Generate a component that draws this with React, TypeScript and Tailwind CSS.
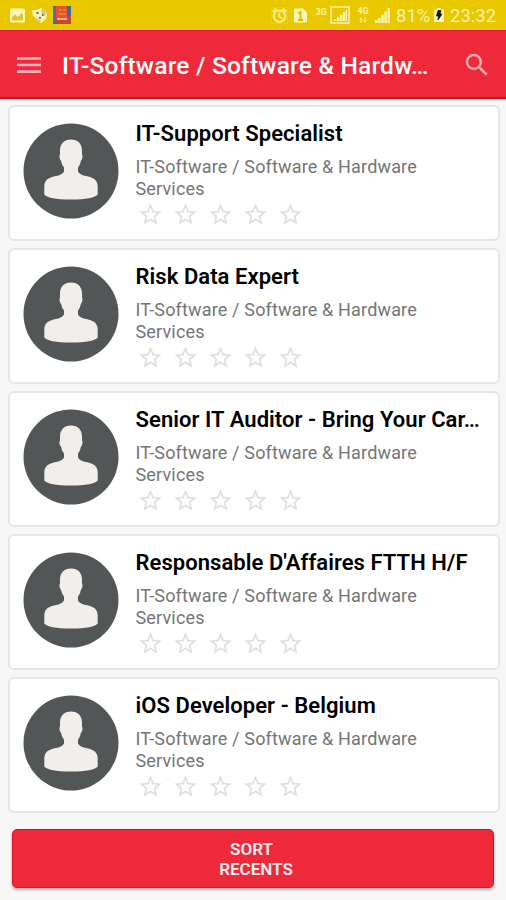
import { MdAccessAlarm, MdMenu, MdSearch, MdStarBorder } from 'react-icons/md';

interface Job {
  id: number;
  title: string;
  category: string;
}

const CATEGORY = 'IT-Software / Software & Hardware Services';

const jobs: Job[] = [
  { id: 1, title: 'IT-Support Specialist', category: CATEGORY },
  { id: 2, title: 'Risk Data Expert', category: CATEGORY },
  { id: 3, title: 'Senior IT Auditor - Bring Your Car…', category: CATEGORY },
  { id: 4, title: "Responsable D'Affaires FTTH H/F", category: CATEGORY },
  { id: 5, title: 'iOS Developer - Belgium', category: CATEGORY },
];

function StatusBar() {
  return (
    <div className="flex h-[30px] shrink-0 items-center bg-[#e9c800] px-[10px] text-[#fbf3a8]">
      {/* Notifications */}
      <svg className="h-[15px] w-[15px]" viewBox="0 0 15 15" aria-hidden="true">
        <rect width="15" height="14" y="0.5" rx="1.5" fill="#fdf6b4" />
        <path d="M2 12.5V9l3-2.5 3 2.5 3.5-4L13 7v5.5z" fill="#e0c62c" />
      </svg>
      <svg className="ml-[7px] h-[16px] w-[15px]" viewBox="0 0 15 16" aria-hidden="true">
        <path d="M0 3l4 0 5-2 4 2 2 4-1 5-5 4-4-3-4-5z" fill="#f7f0c0" />
        <path d="M9 2l4 1 1 4-2 2-2-3z" fill="#d6c67a" />
        <path d="M4.5 5h2v2h-2zM10 7h1.5v2H10zM7 10h2v1.5H7z" fill="#75642c" />
        <path d="M3 10l4 2 2 1-1 2-3-2z" fill="#ddd08a" />
      </svg>
      <svg className="ml-[6px] h-[18px] w-[18px]" viewBox="0 0 18 18" aria-hidden="true">
        <rect width="18" height="18" fill="#c8482c" />
        <path d="M0 0h3v14l-2 4H0z" fill="#4d6f9c" />
        <path d="M3 0h11v12H3z" fill="#e35426" />
        <path d="M14 0h4v9l-3 2z" fill="#3c6a9a" />
        <path d="M6 4h3M10 4h3M5 8h8" stroke="#f08040" strokeWidth="1.5" />
        <path d="M4 12h10v2H4z" fill="#f2b090" />
        <path d="M0 16h5v2H0z" fill="#3c6a9a" />
      </svg>

      {/* Network, battery and clock */}
      <MdAccessAlarm className="ml-auto h-[17px] w-[17px] stroke-[#fbf3a8]" strokeWidth="0.5" aria-hidden="true" />
      <svg className="ml-[6px] h-[15px] w-[13px]" viewBox="0 0 13 15" aria-hidden="true">
        <path d="M0 1.5Q0 .5 1 .5h8l4 4v9q0 1-1 1H1q-1 0-1-1z" fill="#fdf6b4" />
        <path d="M4 5.5L6.5 4v8M4 12h5" fill="none" stroke="#d8b800" strokeWidth="1.8" />
      </svg>
      <span className="ml-[9px] -mt-[6px] text-[9px] font-bold leading-none">3G</span>
      <svg className="ml-[3px] h-[18px] w-[20px]" viewBox="0 0 20 18" aria-hidden="true">
        <rect x="1" y="1" width="18" height="16" fill="none" stroke="currentColor" strokeWidth="1.5" />
        <path d="M4 15v-2h2.5v2zM7 15v-4h2.500v4zM10 15V9h2.3v6zM12.8 15V6H15v9zM15.5 15V4H17v11z" fill="currentColor" />
      </svg>
      <span className="ml-[7px] flex w-[12px] flex-col items-center">
        <span className="text-[9px] font-bold leading-[8px]">4G</span>
        <svg className="mt-[2px] h-[6px] w-[8px]" viewBox="0 0 8 6" aria-hidden="true">
          <path d="M2 6V1M.5 2.5L2 1l1.5 1.5M6 0v5M4.5 3.5L6 5l1.5-1.5" fill="none" stroke="currentColor" />
        </svg>
      </span>
      <svg className="ml-[6px] h-[15px] w-[15px]" viewBox="0 0 15 15" aria-hidden="true">
        <path d="M0 15v-3h2.6v3zM3.1 15v-5h2.6v5zM6.2 15V6.5h2.6V15zM9.3 15V3.5h2.5V15zM12.4 15V0H15v15z" fill="currentColor" />
      </svg>
      <span className="ml-[6px] mt-[2px] w-[33px] whitespace-nowrap text-[18.5px] leading-none">81%</span>
      <svg className="ml-[5px] h-[14px] w-[10px]" viewBox="0 0 10 14" aria-hidden="true">
        <path d="M0 1.5h3V0h4v1.5h3V14H0z" fill="#fdf6b4" />
        <path d="M4 2.5h3L6 6h2l-4 6 .5-4h-2z" fill="#111" stroke="#111" strokeWidth=".8" />
      </svg>
      <span className="ml-[6px] mt-[2px] w-[46px] whitespace-nowrap text-[18.5px] leading-none">23:32</span>
    </div>
  );
}

function Header() {
  return (
    <header className="flex h-[69px] shrink-0 items-center border-b-2 border-t border-b-[#dc0c18] border-t-[#e01c18] bg-[#ee2a3a] pl-[12.5px] pr-[14px]">
      <button type="button" aria-label="Menu" className="mt-px text-[#ffb0b8]">
        <MdMenu className="h-8 w-8" />
      </button>
      <h1 className="ml-[17.5px] mt-[4px] whitespace-nowrap text-[24.5px] font-medium tracking-[0.2px] text-white">
        IT-Software / Software &amp; Hardw…
      </h1>
      <button type="button" aria-label="Search" className="ml-auto mt-px text-[#ffb0b8]">
        <MdSearch className="h-[30px] w-[30px]" />
      </button>
    </header>
  );
}

function Avatar() {
  return (
    <svg className="mt-[0.5px] h-[96px] w-[96px] shrink-0" viewBox="0 0 96 96" aria-hidden="true">
      <circle cx="48" cy="48" r="47.5" fill="#535657" />
      <path
        d="M48 16.500c-7 0-11 4.500-11 11v4c-1 1-.5 5 1.200 6.500.5 3 1.300 4.500 2.800 6.500v4c-2 4-7 4-12 5.500-5 1.500-7.700 4.500-7.700 9.500v8c2 3 12 5 26.700 5s24.700-2 26.700-5v-8c0-5-2.700-8-7.700-9.500-5-1.500-10-1.500-12-5.500v-4c1.500-2 2.300-3.500 2.800-6.500 1.700-1.500 2.200-5.500 1.200-6.500v-4c0-6.500-4-11-11-11z"
        fill="#f1eeec"
      />
    </svg>
  );
}

function Rating() {
  return (
    <div className="mt-[2px] flex gap-[8.2px] pl-[1px] text-[#e0e0e0]">
      {[1, 2, 3, 4, 5].map((star) => (
        <MdStarBorder key={star} className="h-[27px] w-[27px]" />
      ))}
    </div>
  );
}

function JobCard({ job }: { job: Job }) {
  return (
    <li className="flex h-[136px] rounded-[6px] border-2 border-[#e6e6e6] bg-white pl-[13px] pt-[15px]">
      <Avatar />
      <div className="-mt-[4px] ml-[17px]">
        <h2 className="whitespace-nowrap text-[22px] font-semibold leading-[31px] tracking-[0.06px] text-black">{job.title}</h2>
        <p className="mt-[7px] w-[300px] text-[18px] leading-[21.5px] tracking-[0.16px] text-[#757575]">{job.category}</p>
        <Rating />
      </div>
    </li>
  );
}

export default function App() {
  return (
    <div className="flex h-[900px] w-[506px] flex-col overflow-hidden bg-[#f7f7f7] font-['Roboto',sans-serif]">
      <StatusBar />
      <Header />

      <ul className="flex flex-col gap-[7px] pl-[7.5px] pr-[6px] pt-[6px]">
        {jobs.map((job) => (
          <JobCard key={job.id} job={job} />
        ))}
      </ul>

      <button
        type="button"
        className="mx-[12px] mt-[16px] h-[59px] rounded-[5px] border border-[#df101f] bg-[#ee2a3a] text-[17px] font-semibold leading-[20px] text-[#ffeff0] shadow-[0_2px_3px_rgba(0,0,0,0.3)]"
      >
        <span className="block pr-[3px]">SORT</span>
        <span className="block pl-[6px]">RECENTS</span>
      </button>
    </div>
  );
}
